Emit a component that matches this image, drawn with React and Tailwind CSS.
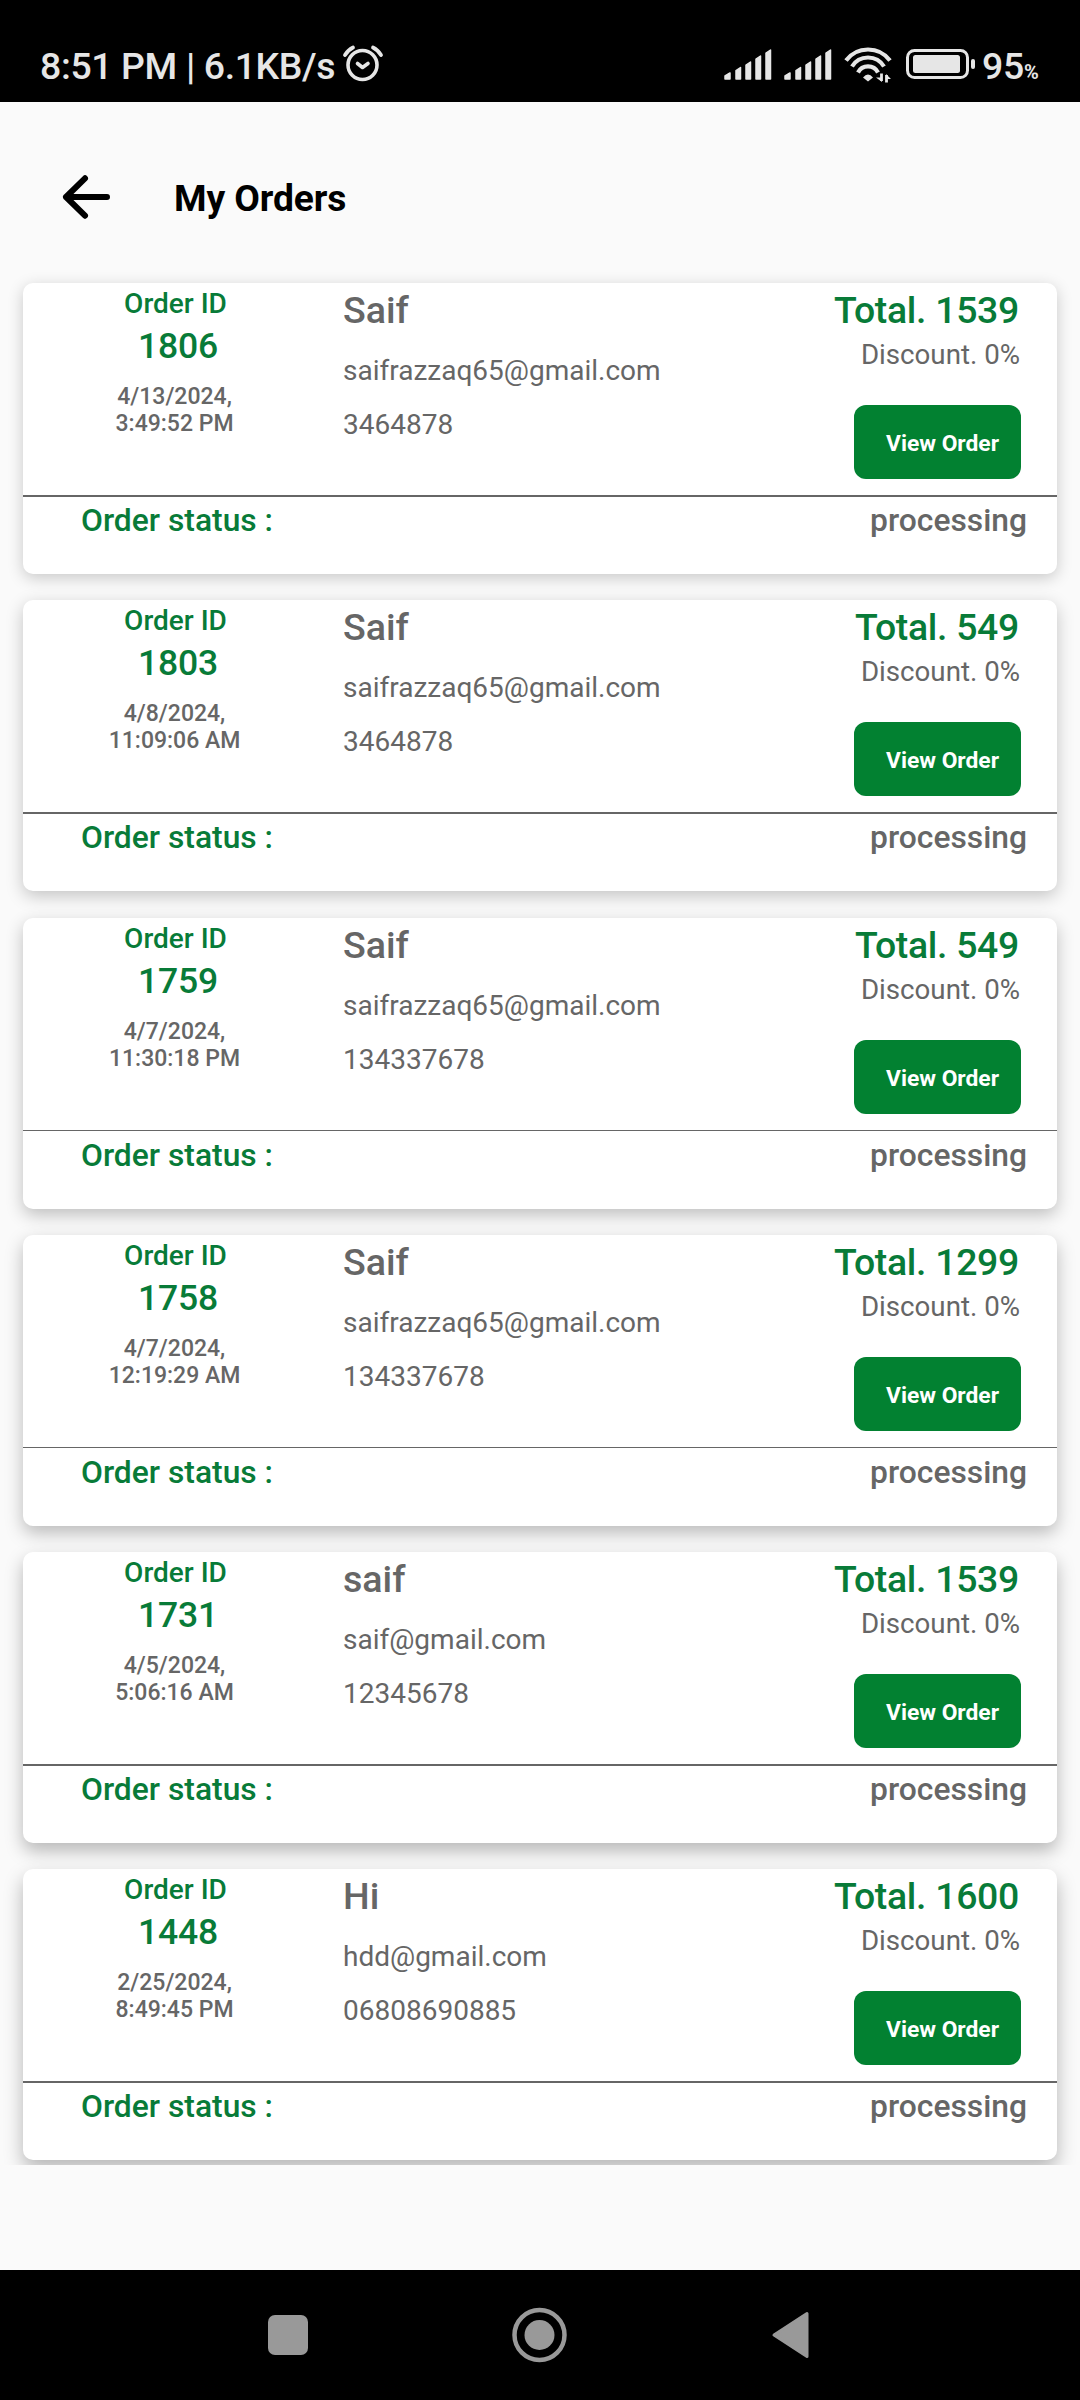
const orders = [
  { id: '1806', date: '4/13/2024,', time: '3:49:52 PM', name: 'Saif', email: 'saifrazzaq65@gmail.com', phone: '3464878', total: '1539', line: 'h-[2px]', frame: 'shadow-[0_4px_16px_rgba(0,0,0,0.2)]' },
  { id: '1803', date: '4/8/2024,', time: '11:09:06 AM', name: 'Saif', email: 'saifrazzaq65@gmail.com', phone: '3464878', total: '549', line: 'h-[2px]', frame: 'mt-[26px] shadow-[0_5px_17px_rgba(0,0,0,0.22)]' },
  { id: '1759', date: '4/7/2024,', time: '11:30:18 PM', name: 'Saif', email: 'saifrazzaq65@gmail.com', phone: '134337678', total: '549', line: 'h-[1px]', frame: 'mt-[27px] shadow-[0_6px_17px_rgba(0,0,0,0.24)]' },
  { id: '1758', date: '4/7/2024,', time: '12:19:29 AM', name: 'Saif', email: 'saifrazzaq65@gmail.com', phone: '134337678', total: '1299', line: 'h-[1px]', frame: 'mt-[26px] shadow-[0_7px_18px_rgba(0,0,0,0.26)]' },
  { id: '1731', date: '4/5/2024,', time: '5:06:16 AM', name: 'saif', email: 'saif@gmail.com', phone: '12345678', total: '1539', line: 'h-[2px]', frame: 'mt-[26px] shadow-[0_8px_18px_rgba(0,0,0,0.27)]' },
  { id: '1448', date: '2/25/2024,', time: '8:49:45 PM', name: 'Hi', email: 'hdd@gmail.com', phone: '06808690885', total: '1600', line: 'h-[2px]', frame: 'mt-[26px] shadow-[0_9px_19px_rgba(0,0,0,0.28)]' },
];

function Signal() {
  return (
    <svg width="48" height="32" viewBox="0 0 48 32" fill="#e6e6e6" stroke="#e6e6e6" strokeWidth="1.5" strokeLinejoin="round">
      <path d="M1 30V27L6 24V30Z M12 30V21.5L16.5 18.5V30Z M22 30V16L26.500 13V30Z M32 30V10L36.500 7V30Z M42 30V4L46.500 1V30Z" />
    </svg>
  );
}

function StatusBar() {
  return (
    <header className="flex h-[102px] items-start bg-black text-[#e6e6e6]">
      <div className="mt-[44px] ml-[40px] w-[297px] text-[37.4px] leading-[44px] font-medium tracking-[-0.36px] whitespace-nowrap">8:51 PM | 6.1KB/s</div>
      <svg className="mt-[44px] ml-[5px]" width="42" height="40" viewBox="0 0 42 40" fill="none" stroke="#e6e6e6" strokeLinecap="round" strokeLinejoin="round">
        <circle cx="20.500" cy="21" r="14.500" strokeWidth="3.600" />
        <path d="M15.500 19.500L20.500 23.500L26 19.500" strokeWidth="3.600" />
        <path d="M3 11Q6 6 11 3.500M31 3.500Q36 6 39 11" strokeWidth="3.800" />
      </svg>
      <div className="mt-[49px] ml-[340px] flex gap-[12px]">
        <Signal />
        <Signal />
      </div>
      <svg className="mt-[47px] ml-[12px]" width="48" height="36" viewBox="0 0 48 36" fill="none" stroke="#e6e6e6" strokeWidth="4.200">
        <path d="M2 13.500A27.500 27.500 0 0 1 46 13.500" />
        <path d="M8 19.500A18.700 18.700 0 0 1 40 19.500" />
        <path d="M14 25.500A11.300 11.300 0 0 1 34 25.500" />
        <path d="M19 30.500Q24 24.500 29 30.500L24 34.500Z" fill="#e6e6e6" stroke="none" />
        <path d="M37.500 26.500V34M42.500 28V35.500" strokeWidth="2.800" />
        <path d="M32 30.500H38V35Z M42 27V32H47Z" fill="#e6e6e6" stroke="none" />
      </svg>
      <svg className="mt-[49px] ml-[13px]" width="70" height="30" viewBox="0 0 70 30">
        <rect x="2.500" y="1.500" width="60" height="27" rx="7" fill="none" stroke="#e6e6e6" strokeWidth="3" />
        <rect x="8" y="6" width="47" height="18" rx="2.500" fill="#e6e6e6" />
        <rect x="66" y="10" width="4" height="10" rx="2" fill="#e6e6e6" />
      </svg>
      <div className="mt-[44px] ml-[7px] flex items-baseline leading-[44px] font-medium">
        <span className="text-[37.4px] tracking-[-0.3px]">95</span>
        <span className="text-[20px] font-bold">%</span>
      </div>
    </header>
  );
}

function OrderCard({ order }) {
  return (
    <article className={'h-[291px] shrink-0 rounded-[10px] bg-white text-[#666] ' + order.frame}>
      <div className="flex h-[212px]">
        <div className="w-[304px] pt-[4px] text-center font-medium">
          <div className="pl-px text-[28px] leading-[33px] text-[#087b38]">Order ID</div>
          <div className="mt-[5px] pl-[6px] text-[35.500px] leading-[42px] tracking-[-0.2px] text-[#087b38]">{order.id}</div>
          <div className="mt-[16px] pr-[1px] text-[23px] leading-[27px]">{order.date}<br />{order.time}</div>
        </div>
        <div className="ml-[16px] w-[400px] pt-[4px]">
          <div className="text-[37.600px] leading-[46px] font-medium">{order.name}</div>
          <div className="mt-[21px] text-[28px] leading-[34px]">{order.email}</div>
          <div className="mt-[20px] text-[28px] leading-[34px]">{order.phone}</div>
        </div>
        <div className="flex flex-1 flex-col items-end pt-[4px] pr-[36px]">
          <div className="pr-[2px] text-[37.400px] leading-[46px] font-medium tracking-[-0.3px] text-[#087b38]">Total. {order.total}</div>
          <div className="mt-[5px] pr-[1px] text-[27.700px] leading-[34px]">Discount. 0%</div>
          <button className="mt-[33px] h-[74px] w-[167px] rounded-[12px] bg-[#028131] pt-[4px] pr-[22px] text-right text-[22.800px] font-bold text-white">View Order</button>
        </div>
      </div>
      <div className="h-[2px]"><div className={'bg-[#666] ' + order.line} /></div>
      <div className="flex justify-between pt-[4px] pr-[30px] pl-[58px] text-[31.800px] leading-[39px] font-medium">
        <span className="text-[#087b38]">Order status :</span>
        <span>processing</span>
      </div>
    </article>
  );
}

export default function App() {
  return (
    <div className="flex h-[2400px] w-[1080px] flex-col bg-[#fafafa] font-[Roboto,sans-serif]">
      <StatusBar />
      <div className="flex h-[153px] items-center pt-[37px] pl-[60px]">
        <svg width="54" height="48" viewBox="0 0 54 48" fill="none" stroke="#000" strokeWidth="6" strokeLinecap="round" strokeLinejoin="round">
          <path d="M25 5.300L6 24L25 42.700M6 24H47" />
        </svg>
        <h1 className="mt-[2px] ml-[60px] text-[37.200px] leading-[44px] font-bold tracking-[-0.1px] text-black">My Orders</h1>
      </div>
      <main className="flex h-[1910px] flex-col overflow-hidden px-[23px] pt-[28px]">
        {orders.map((order) => <OrderCard key={order.id} order={order} />)}
      </main>
      <nav className="mt-auto flex h-[130px] bg-black">
        <svg width="1080" height="130" viewBox="0 0 1080 130" fill="#999">
          <rect x="268" y="45" width="40" height="40" rx="7" />
          <circle cx="539.500" cy="65" r="25" fill="none" stroke="#999" strokeWidth="4.500" />
          <circle cx="539.500" cy="65" r="15" />
          <path d="M774 65L807 43.500V86.500Z" stroke="#999" strokeWidth="3" strokeLinejoin="round" />
        </svg>
      </nav>
    </div>
  );
}
